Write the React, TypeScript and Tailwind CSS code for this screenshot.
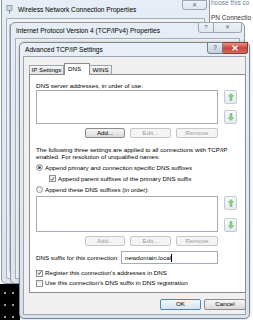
import React from "react";

const sans = "font-['Liberation_Sans',Arial,sans-serif]";

function ArrowBtn({ down }: { down?: boolean }) {
  return (
    <div className="w-[13px] h-[14px] border border-[#c4ccd3] rounded-[2px] bg-gradient-to-b from-[#f8fafb] to-[#e6ebef] flex items-center justify-center">
      <svg width="6" height="8" viewBox="0 0 6 8" className={down ? "rotate-180" : ""}>
        <path d="M3 0.6 L5.5 3.2 H3.9 V7.4 H2.1 V3.2 H0.5 Z" fill="#9dd48f" stroke="#5ea856" strokeWidth="0.6" />
      </svg>
    </div>
  );
}

function Btn({ label, kind, w }: { label: string; kind: "on" | "off" | "def"; w: string }) {
  const look =
    kind === "off"
      ? "border-[#c3c8cc] bg-[#f4f4f4] text-[#9b9b9b]"
      : kind === "def"
      ? "border-[#4a87bb] bg-gradient-to-b from-[#f3f7fa] to-[#d8e3ec] text-black"
      : "border-[#8c8c8c] bg-gradient-to-b from-[#f6f6f6] to-[#d9d9d9] text-black";
  return (
    <div className={`h-full ${w} rounded-[2px] border flex items-center justify-center text-[6.2px] leading-none ${look}`}>
      {label}
    </div>
  );
}

function Check({ checked }: { checked?: boolean }) {
  return (
    <div className="w-[7px] h-[7px] border border-[#8e8f8f] bg-gradient-to-br from-[#e6e6e6] to-[#fdfdfd] flex items-center justify-center shrink-0">
      {checked && (
        <svg width="6" height="6" viewBox="0 0 6 6">
          <path d="M1 3.2 L2.4 4.7 L5 1" fill="none" stroke="#2a4a72" strokeWidth="1.1" />
        </svg>
      )}
    </div>
  );
}

function Radio({ checked }: { checked?: boolean }) {
  return (
    <div className="w-[7px] h-[7px] rounded-full border border-[#8e8f8f] bg-gradient-to-br from-[#e3e3e3] to-[#fdfdfd] flex items-center justify-center shrink-0">
      {checked && <div className="w-[3px] h-[3px] rounded-full bg-[#3b5a7c]" />}
    </div>
  );
}

function ListRow({ h }: { h: string }) {
  return (
    <div className="flex">
      <div className={`w-[182px] ${h} border border-[#a5acb5] bg-white`} />
      <div className="ml-[6px] flex flex-col justify-between">
        <ArrowBtn />
        <ArrowBtn down />
      </div>
    </div>
  );
}

function DisabledRow() {
  return (
    <div className="w-[182px] h-[10px] mt-[4px] flex justify-end gap-[5px]">
      <Btn label="Add..." kind="off" w="w-[40px]" />
      <Btn label="Edit..." kind="off" w="w-[41px]" />
      <Btn label="Remove" kind="off" w="w-[42px]" />
    </div>
  );
}

export default function App() {
  return (
    <div className={`relative w-[253px] h-[320px] overflow-hidden bg-white text-black ${sans}`}>
      {/* desktop bits behind the windows */}
      <div className="absolute left-[211px] top-[-2px] text-[6.5px] text-[#6b7f99] whitespace-nowrap">hoose this co</div>
      <div className="absolute left-[211px] top-[13px] text-[6.5px] text-[#333] whitespace-nowrap">PN Connectio</div>
      <div className="absolute left-0 top-[284px] w-[20px] h-[36px] bg-black bg-[radial-gradient(circle,#9a9a9a_0.8px,transparent_1.2px)] bg-[length:8px_12px] bg-[position:1px_3px]" />

      {/* Wireless Network Connection Properties */}
      <div className="absolute left-[1px] top-[-6px] w-[209px] h-[290px] rounded-[5px] border border-[#8a97a4] bg-gradient-to-b from-[#e6edf5] to-[#dbe4ee] flex flex-col">
        <div className="h-[23px] flex items-center pl-[4px] pt-[6px] relative">
          <svg width="7" height="9" viewBox="0 0 7 9" className="mr-[5px]">
            <rect x="1" y="0.5" width="5" height="5" fill="#c9d6e4" stroke="#6b7b8c" strokeWidth="0.6" />
            <rect x="3" y="5.5" width="1" height="3" fill="#6b7b8c" />
          </svg>
          <span className="text-[6.6px]">Wireless Network Connection Properties</span>
          <div className="absolute right-[2px] top-[5px] w-[25px] h-[10px] rounded-b-[3px] border border-[#9aa6b2] bg-gradient-to-b from-[#eef2f6] to-[#dfe6ee] flex items-center justify-center text-[6px] text-[#5b6875]">
            ✕
          </div>
        </div>
        <div className="flex-1 mx-[4px] mb-[4px] border border-[#a3aeb9] bg-[#f0f0f0] rounded-b-[2px]">
          <div className="ml-[2px] mt-[5px] h-[250px] w-[40px] border border-[#b9bec4] rounded-b-[4px]" />
        </div>
      </div>

      {/* Internet Protocol Version 4 (TCP/IPv4) Properties */}
      <div className="absolute left-[10px] top-[22px] w-[235px] h-[262px] rounded-[5px] border border-[#8a97a4] bg-gradient-to-b from-[#e6edf5] to-[#dbe4ee] flex flex-col">
        <div className="h-[15px] flex items-center pl-[5px] relative">
          <span className="text-[6.6px]">Internet Protocol Version 4 (TCP/IPv4) Properties</span>
          <div className="absolute right-[2px] top-[-1px] flex">
            <div className="w-[16px] h-[11px] rounded-bl-[3px] border border-[#9aa6b2] bg-gradient-to-b from-[#eef2f6] to-[#dfe6ee] flex items-center justify-center text-[6px] text-[#5b6875]">
              ?
            </div>
            <div className="w-[28px] h-[11px] rounded-br-[3px] border border-l-0 border-[#9aa6b2] bg-gradient-to-b from-[#eef2f6] to-[#dfe6ee] flex items-center justify-center text-[6px] text-[#5b6875]">
              ✕
            </div>
          </div>
        </div>
        <div className="flex-1 mx-[4px] mb-[4px] border border-[#a3aeb9] bg-[#f0f0f0]" />
      </div>

      {/* Advanced TCP/IP Settings */}
      <div className="absolute left-[19px] top-[42px] w-[231px] h-[277px] rounded-[5px] border border-[#7b8896] bg-gradient-to-b from-[#e9eff6] to-[#d8e2ed] flex flex-col shadow-[0_0_3px_rgba(0,0,0,0.25)]">
        <div className="h-[13px] flex items-center pl-[5px] relative">
          <span className="text-[6.6px]">Advanced TCP/IP Settings</span>
          <div className="absolute z-20 right-[1px] top-[-1px] flex">
            <div className="w-[16px] h-[12px] rounded-bl-[3px] border border-[#6f7e8e] bg-gradient-to-b from-[#e7edf3] to-[#c2cedb] flex items-center justify-center text-[6.5px] text-[#3c4854]">
              ?
            </div>
            <div className="w-[25px] h-[12px] rounded-br-[3px] border border-l-0 border-[#8a3b33] bg-red-700 bg-gradient-to-b from-[#e59487] via-[#c8443a] to-[#d36a5f] flex items-center justify-center">
              <svg width="8" height="6" viewBox="0 0 8 6">
                <path d="M1.5 0.8 L6.5 5.2 M6.5 0.8 L1.5 5.2" stroke="#ffffff" strokeWidth="1.4" />
              </svg>
            </div>
          </div>
        </div>

        <div className="flex-1 mx-[3px] mb-[3px] border border-[#99a5b1] bg-[#f0f0f0] flex flex-col pl-[5px] pr-[2px] pt-[6px]">
          {/* tabs */}
          <div className="flex items-end h-[11px]">
            <div className="h-[9px] w-[35px] border border-b-0 border-[#9ca3ab] bg-gradient-to-b from-[#f6f6f6] to-[#e4e4e4] flex items-center justify-center text-[6.2px] leading-none">
              IP Settings
            </div>
            <div className="relative z-10 -mb-px h-[12px] w-[26px] border border-b-0 border-[#898c95] bg-white flex items-start pt-[2px] pl-[3px] text-[6.2px] leading-none">
              DNS
            </div>
            <div className="h-[9px] w-[22px] border border-b-0 border-l-0 border-[#9ca3ab] bg-gradient-to-b from-[#f6f6f6] to-[#e4e4e4] flex items-center justify-center text-[6.2px] leading-none">
              WINS
            </div>
          </div>

          {/* panel */}
          <div className="w-[217px] h-[219px] border border-[#898c95] bg-white pl-[6px] flex flex-col text-[6.2px]">
            <div className="mt-[7px] leading-[7px]">DNS server addresses, in order of use:</div>
            <div className="mt-[1px]">
              <ListRow h="h-[34px]" />
            </div>
            <div className="w-[182px] h-[10px] mt-[4px] flex justify-end gap-[5px]">
              <Btn label="Add..." kind="on" w="w-[40px]" />
              <Btn label="Edit..." kind="off" w="w-[41px]" />
              <Btn label="Remove" kind="off" w="w-[42px]" />
            </div>
            <div className="mt-[8px] leading-[7px]">
              <div>The following three settings are applied to all connections with TCP/IP</div>
              <div>enabled. For resolution of unqualified names:</div>
            </div>
            <div className="mt-[2px] h-[11px] flex items-center gap-[2px]">
              <Radio checked />
              <span>Append primary and connection specific DNS suffixes</span>
            </div>
            <div className="h-[11px] flex items-center gap-[2px] pl-[13px]">
              <Check checked />
              <span>Append parent suffixes of the primary DNS suffix</span>
            </div>
            <div className="h-[11px] flex items-center gap-[2px]">
              <Radio />
              <span>Append these DNS suffixes (in order):</span>
            </div>
            <div className="mt-[1px]">
              <ListRow h="h-[36px]" />
            </div>
            <DisabledRow />
            <div className="mt-[5px] h-[13px] w-[182px] flex items-center justify-between">
              <span>DNS suffix for this connection:</span>
              <div className="w-[97px] h-full border border-[#a5acb5] bg-white flex items-center pl-[3px]">
                <span>newdomain.local</span>
                <span className="w-px h-[8px] bg-black" />
              </div>
            </div>
            <div className="mt-[4px] h-[10px] flex items-center gap-[2px]">
              <Check checked />
              <span>Register this connection's addresses in DNS</span>
            </div>
            <div className="h-[10px] flex items-center gap-[2px]">
              <Check />
              <span>Use this connection's DNS suffix in DNS registration</span>
            </div>
          </div>

          {/* footer */}
          <div className="w-[217px] h-[11px] mt-[6px] flex justify-end gap-[3px]">
            <Btn label="OK" kind="def" w="w-[41px]" />
            <Btn label="Cancel" kind="on" w="w-[42px]" />
          </div>
        </div>
      </div>
    </div>
  );
}
